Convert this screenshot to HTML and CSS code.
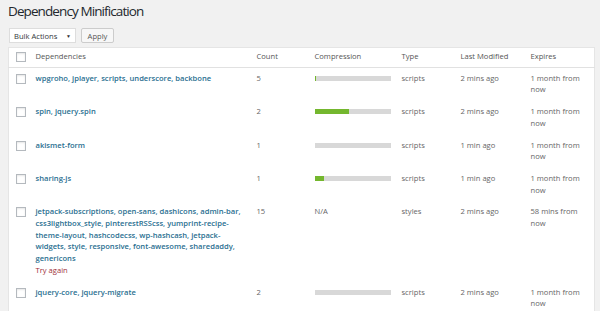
FILE: index.html
```html
<!DOCTYPE html>
<html>
<head>
  <meta name="viewport" content="width=device-width, initial-scale=1.0">
  <link rel="stylesheet" href="styles.css">
</head>
<body>

<div class="wrap">
  <h1>Dependency Minification</h1>

  <div class="tablenav">
    <div class="select">Bulk Actions <span class="caret">&#9660;</span></div>
    <button class="apply">Apply</button>
  </div>

  <table class="deps">
    <colgroup>
      <col class="c-cb">
      <col class="c-deps">
      <col class="c-count">
      <col class="c-comp">
      <col class="c-type">
      <col class="c-mod">
      <col class="c-exp">
    </colgroup>
    <thead>
      <tr>
        <th><span class="cb"></span></th>
        <th>Dependencies</th>
        <th>Count</th>
        <th>Compression</th>
        <th>Type</th>
        <th>Last Modified</th>
        <th>Expires</th>
      </tr>
    </thead>
    <tbody>
      <tr>
        <td><span class="cb"></span></td>
        <td><a href="#">wpgroho, jplayer, scripts, underscore, backbone</a></td>
        <td>5</td>
        <td><div class="bar"><div class="fill" style="width: 2%"></div></div></td>
        <td>scripts</td>
        <td>2 mins ago</td>
        <td>1 month from now</td>
      </tr>
      <tr>
        <td><span class="cb"></span></td>
        <td><a href="#">spin, jquery.spin</a></td>
        <td>2</td>
        <td><div class="bar"><div class="fill" style="width: 46%"></div></div></td>
        <td>scripts</td>
        <td>2 mins ago</td>
        <td>1 month from now</td>
      </tr>
      <tr>
        <td><span class="cb"></span></td>
        <td><a href="#">akismet-form</a></td>
        <td>1</td>
        <td><div class="bar"><div class="fill" style="width: 0%"></div></div></td>
        <td>scripts</td>
        <td>1 min ago</td>
        <td>1 month from now</td>
      </tr>
      <tr>
        <td><span class="cb"></span></td>
        <td><a href="#">sharing-js</a></td>
        <td>1</td>
        <td><div class="bar"><div class="fill" style="width: 12%"></div></div></td>
        <td>scripts</td>
        <td>1 min ago</td>
        <td>1 month from now</td>
      </tr>
      <tr>
        <td><span class="cb"></span></td>
        <td>
          <a href="#">jetpack-subscriptions, open-sans, dashicons, admin-bar,<br>
          css3lightbox_style, pinterestRSScss, yumprint-recipe-<br>theme-layout, hashcodecss, wp-hashcash, jetpack-<br>widgets, style, responsive, font-awesome, sharedaddy,<br>
          genericons</a>
          <div class="retry">Try again</div>
        </td>
        <td>15</td>
        <td>N/A</td>
        <td>styles</td>
        <td>2 mins ago</td>
        <td>58 mins from now</td>
      </tr>
      <tr>
        <td><span class="cb"></span></td>
        <td><a href="#">jquery-core, jquery-migrate</a></td>
        <td>2</td>
        <td><div class="bar"><div class="fill" style="width: 0%"></div></div></td>
        <td>scripts</td>
        <td>2 mins ago</td>
        <td>1 month from now</td>
      </tr>
    </tbody>
  </table>
</div>

</body>
</html>
```

FILE: styles.css
```css
body {
  margin: 0;
  background: #f1f1f1;
  font-family: 'Open Sans', 'Liberation Sans', sans-serif;
  color: #666;
}

.wrap {
  padding: 0 6px 0 8px;
}

h1 {
  margin: 0;
  font-size: 13.5px;
  font-weight: 400;
  letter-spacing: -0.9px;
  line-height: 22px;
  color: #23282d;
}

.tablenav {
  display: flex;
  align-items: center;
  gap: 5px;
  margin-top: 6px;
  margin-left: 1px;
  height: 15px;
}

.select {
  box-sizing: border-box;
  width: 67px;
  height: 15px;
  padding: 0 4px;
  display: flex;
  align-items: center;
  justify-content: space-between;
  background: #fff;
  border: 1px solid #ddd;
  font-size: 7.6px;
  color: #32373c;
}

.caret {
  font-size: 5px;
  color: #333;
}

.apply {
  box-sizing: border-box;
  height: 15px;
  width: 33px;
  padding: 0;
  background: #f7f7f7;
  border: 1px solid #ccc;
  border-radius: 2px;
  font-family: inherit;
  font-size: 7.6px;
  color: #555;
}

.deps {
  margin-top: 4px;
  width: 586px;
  table-layout: fixed;
  border-collapse: collapse;
  background: #fff;
  border: 1px solid #e5e5e5;
  font-size: 7.6px;
  line-height: 11.7px;
}

.c-cb { width: 22px; }
.c-deps { width: 221px; }
.c-count { width: 58px; }
.c-comp { width: 87px; }
.c-type { width: 59px; }
.c-mod { width: 70px; }
.c-exp { width: 69px; }

th {
  text-align: left;
  font-weight: 400;
  color: #555;
  padding: 3px 5px 4px 5px;
  border-bottom: 1px solid #e1e1e1;
}

td {
  vertical-align: top;
  padding: 5px 8px 5px 5px;
}

th:first-child, td:first-child {
  padding-left: 7px;
  padding-right: 0;
}

.cb {
  display: block;
  box-sizing: border-box;
  width: 10px;
  height: 10px;
  margin-top: 1px;
  border: 1px solid #b4b9be;
  background: #fff;
  box-shadow: inset 0 1px 2px rgba(0, 0, 0, 0.1);
}

a {
  color: #2a6f91;
  font-weight: 600;
  text-decoration: none;
}

.retry {
  color: #a0303a;
}

.bar {
  margin-top: 3px;
  width: 76px;
  height: 5px;
  background: #d8d8d8;
}

.fill {
  height: 100%;
  background: #74b72e;
}
```
